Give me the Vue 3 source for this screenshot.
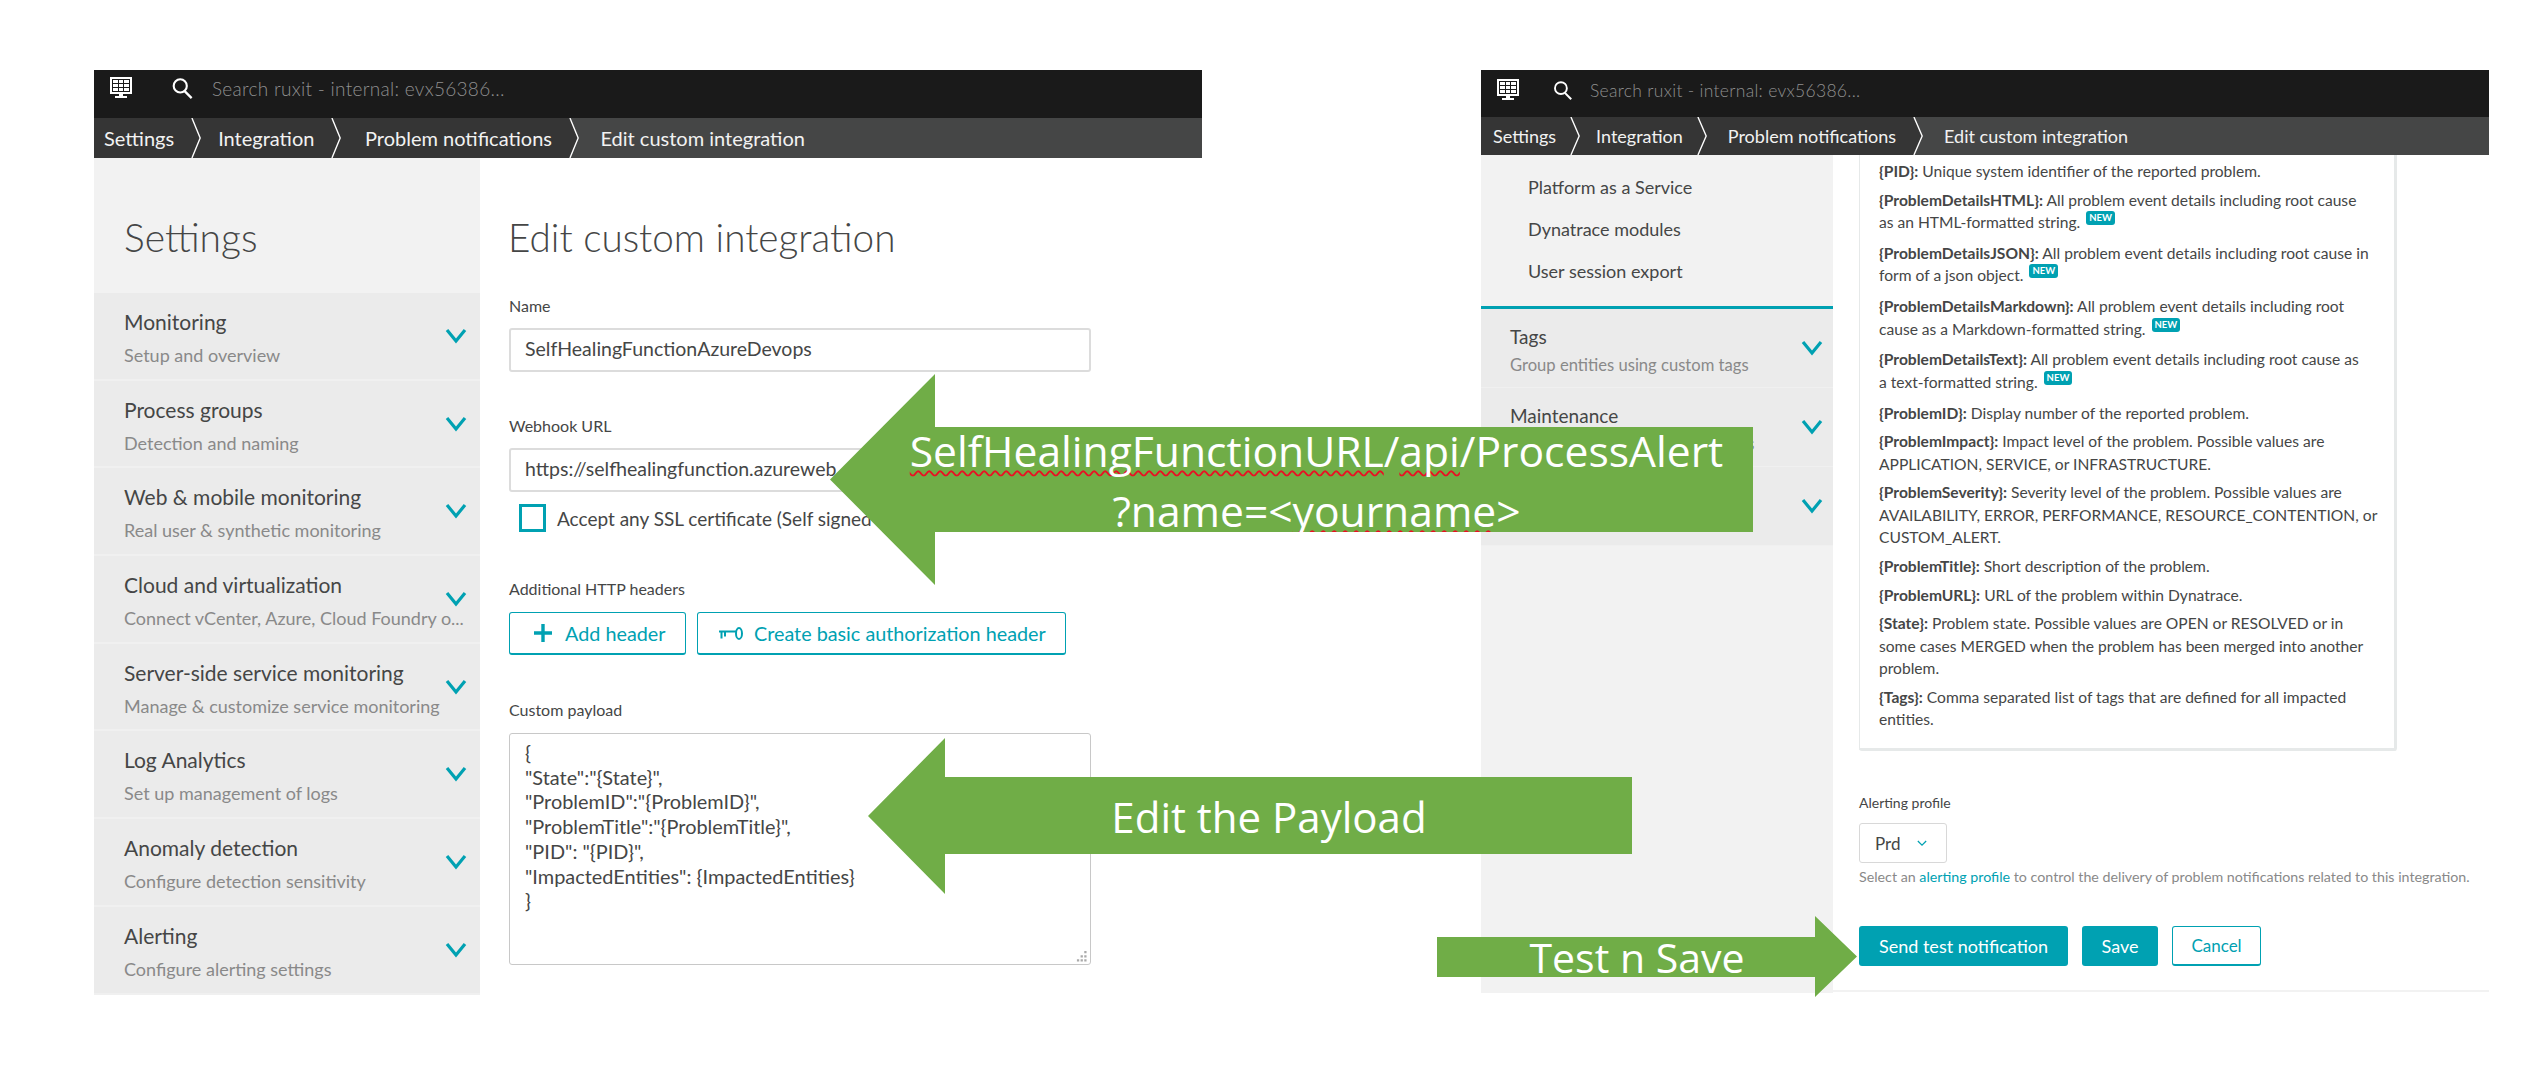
<script setup>
const crumbs = ['Settings', 'Integration', 'Problem notifications']

const leftMenu = [
  { title: 'Monitoring', sub: 'Setup and overview' },
  { title: 'Process groups', sub: 'Detection and naming' },
  { title: 'Web & mobile monitoring', sub: 'Real user & synthetic monitoring' },
  { title: 'Cloud and virtualization', sub: 'Connect vCenter, Azure, Cloud Foundry o...' },
  { title: 'Server-side service monitoring', sub: 'Manage & customize service monitoring' },
  { title: 'Log Analytics', sub: 'Set up management of logs' },
  { title: 'Anomaly detection', sub: 'Configure detection sensitivity' },
  { title: 'Alerting', sub: 'Configure alerting settings' }
]

const rightMenu = [
  { title: 'Tags', sub: 'Group entities using custom tags' },
  { title: 'Maintenance', sub: 'Configure maintenance schedules' },
  { title: '', sub: '' }
]

const subLinks = ['Platform as a Service', 'Dynatrace modules', 'User session export']

const payload = ['{', '"State":"{State}",', '"ProblemID":"{ProblemID}",', '"ProblemTitle":"{ProblemTitle}",', '"PID": "{PID}",', '"ImpactedEntities": {ImpactedEntities}', '}']

// line breaks follow the reference, the fallback font has other widths
const placeholders = [
  { key: '{PID}:', text: 'Unique system identifier of the reported problem.' },
  { key: '{ProblemDetailsHTML}:', text: 'All problem event details including root cause\nas an HTML-formatted string.', isNew: true },
  { key: '{ProblemDetailsJSON}:', text: 'All problem event details including root cause in\nform of a json object.', isNew: true },
  { key: '{ProblemDetailsMarkdown}:', text: 'All problem event details including root\ncause as a Markdown-formatted string.', isNew: true },
  { key: '{ProblemDetailsText}:', text: 'All problem event details including root cause as\na text-formatted string.', isNew: true },
  { key: '{ProblemID}:', text: 'Display number of the reported problem.' },
  { key: '{ProblemImpact}:', text: 'Impact level of the problem. Possible values are\nAPPLICATION, SERVICE, or INFRASTRUCTURE.' },
  { key: '{ProblemSeverity}:', text: 'Severity level of the problem. Possible values are\nAVAILABILITY, ERROR, PERFORMANCE, RESOURCE_CONTENTION, or\nCUSTOM_ALERT.' },
  { key: '{ProblemTitle}:', text: 'Short description of the problem.' },
  { key: '{ProblemURL}:', text: 'URL of the problem within Dynatrace.' },
  { key: '{State}:', text: 'Problem state. Possible values are OPEN or RESOLVED or in\nsome cases MERGED when the problem has been merged into another\nproblem.' },
  { key: '{Tags}:', text: 'Comma separated list of tags that are defined for all impacted\nentities.' }
]
</script>

<template>
  <div class="page">
    <!-- left screenshot -->
    <section class="shot shot-left">
      <header class="topbar">
        <svg class="monitor" viewBox="0 0 24 24"><path fill="#fff" d="M1 1h22v17H14v2h4v2H6v-2h4v-2H1z"/><path fill="#1a1a1a" d="M3 3h18v13H3z"/><path fill="#fff" d="M4 4h5v3H4zM10 4h4v3h-4zM15 4h5v3h-5zM4 8h5v3H4zM10 8h4v3h-4zM15 8h5v3h-5zM4 12h5v3H4zM10 12h4v3h-4zM15 12h5v3h-5z"/></svg>
        <svg class="search" viewBox="0 0 24 24"><circle cx="10" cy="9" r="7.500" fill="none" stroke="#fff" stroke-width="2.400"/><path d="M15 15L23 23" stroke="#fff" stroke-width="2.600"/></svg>
        <span class="search-text">Search ruxit - internal: evx56386...</span>
      </header>
      <nav class="crumbs">
        <template v-for="(c, i) in crumbs" :key="c">
          <span class="crumb">{{ c }}</span>
          <svg class="crumb-sep" viewBox="0 0 12 40" preserveAspectRatio="none"><path v-if="i === crumbs.length - 1" d="M1 0L10 20L1 40H12V0z" fill="#454646"/><path d="M1 0L10 20L1 40" fill="none" stroke="#fff" stroke-width="1.500"/></svg>
        </template>
        <span class="crumb crumb-last">Edit custom integration</span>
      </nav>
      <div class="body">
        <aside class="side">
          <h2 class="side-title">Settings</h2>
          <div v-for="m in leftMenu" :key="m.title" class="menu-item">
            <div class="menu-text">
              <div class="menu-title">{{ m.title }}</div>
              <div class="menu-sub">{{ m.sub }}</div>
            </div>
            <svg class="chev" viewBox="0 0 22 16"><path d="M2 2l9 11l9-11" fill="none" stroke="#00a1b2" stroke-width="3.200"/></svg>
          </div>
        </aside>
        <main class="form">
          <h1 class="form-title">Edit custom integration</h1>
          <label class="lbl lbl-name">Name</label>
          <div class="input">SelfHealingFunctionAzureDevops</div>
          <label class="lbl lbl-hook">Webhook URL</label>
          <div class="input">https://selfhealingfunction.azureweb</div>
          <div class="check-row">
            <span class="check"></span>
            <span>Accept any SSL certificate (Self signed c</span>
          </div>
          <label class="lbl lbl-headers">Additional HTTP headers</label>
          <div class="btn-row">
            <button class="btn btn-add">
              <svg class="plus" viewBox="0 0 20 20"><path d="M10 1v18M1 10h18" stroke="#00a1b2" stroke-width="3.400"/></svg>
              Add header
            </button>
            <button class="btn btn-auth">
              <svg class="key" viewBox="0 0 24 13"><path d="M0 4.500h17M2.500 4.500v7M6 4.500v5" fill="none" stroke="#00a1b2" stroke-width="2"/><ellipse cx="20" cy="6.500" rx="3" ry="5.500" fill="none" stroke="#00a1b2" stroke-width="2"/></svg>
              Create basic authorization header
            </button>
          </div>
          <label class="lbl lbl-payload">Custom payload</label>
          <div class="textarea">
            <div v-for="line in payload" :key="line">{{ line }}</div>
            <svg class="resize" viewBox="0 0 12 12"><path fill="#aaa" d="M9 0h2.500v2.500H9zM5 4.500h2.500V7H5zM9 4.500h2.500V7H9zM1 9h2.500v2.500H1zM5 9h2.500v2.500H5zM9 9h2.500v2.500H9z"/></svg>
          </div>
        </main>
      </div>
    </section>

    <!-- right screenshot -->
    <section class="shot shot-right">
      <header class="topbar">
        <svg class="monitor" viewBox="0 0 24 24"><path fill="#fff" d="M1 1h22v17H14v2h4v2H6v-2h4v-2H1z"/><path fill="#1a1a1a" d="M3 3h18v13H3z"/><path fill="#fff" d="M4 4h5v3H4zM10 4h4v3h-4zM15 4h5v3h-5zM4 8h5v3H4zM10 8h4v3h-4zM15 8h5v3h-5zM4 12h5v3H4zM10 12h4v3h-4zM15 12h5v3h-5z"/></svg>
        <svg class="search" viewBox="0 0 24 24"><circle cx="10" cy="9" r="7.500" fill="none" stroke="#fff" stroke-width="2.400"/><path d="M15 15L23 23" stroke="#fff" stroke-width="2.600"/></svg>
        <span class="search-text">Search ruxit - internal: evx56386...</span>
      </header>
      <nav class="crumbs">
        <template v-for="(c, i) in crumbs" :key="c">
          <span class="crumb">{{ c }}</span>
          <svg class="crumb-sep" viewBox="0 0 12 40" preserveAspectRatio="none"><path v-if="i === crumbs.length - 1" d="M1 0L10 20L1 40H12V0z" fill="#454646"/><path d="M1 0L10 20L1 40" fill="none" stroke="#fff" stroke-width="1.500"/></svg>
        </template>
        <span class="crumb crumb-last">Edit custom integration</span>
      </nav>
      <div class="body">
        <aside class="side side-r">
          <div class="sub-links">
            <div v-for="l in subLinks" :key="l" class="sub-link">{{ l }}</div>
          </div>
          <div v-for="m in rightMenu" :key="m.title" class="menu-item menu-item-r">
            <div class="menu-text">
              <div class="menu-title">{{ m.title }}</div>
              <div class="menu-sub">{{ m.sub }}</div>
            </div>
            <svg class="chev" viewBox="0 0 22 16"><path d="M2 2l9 11l9-11" fill="none" stroke="#00a1b2" stroke-width="3.200"/></svg>
          </div>
        </aside>
        <main class="detail">
          <div class="card">
            <p v-for="p in placeholders" :key="p.key" class="ph" :class="{ 'has-new': p.isNew }">
              <b>{{ p.key }}</b> {{ p.text }}<span v-if="p.isNew" class="new">NEW</span>
            </p>
          </div>
          <label class="lbl lbl-profile">Alerting profile</label>
          <div class="select">Prd<svg class="mini-chev" viewBox="0 0 12 8"><path d="M1 1l5 5l5-5" fill="none" stroke="#00a1b2" stroke-width="1.500"/></svg></div>
          <p class="hint">Select an <span class="link">alerting profile</span> to control the delivery of problem notifications related to this integration.</p>
          <div class="actions">
            <button class="btn-solid btn-send">Send test notification</button>
            <button class="btn-solid btn-save">Save</button>
            <button class="btn btn-cancel">Cancel</button>
          </div>
        </main>
      </div>
    </section>

    <!-- annotation arrows lie on top of both screenshots -->
    <div class="arrow arrow-url">
      <span>
        <i class="typo">SelfHealingFunctionURL</i>/<i class="typo">api</i>/ProcessAlert<br>?name=&lt;<i class="typo">yourname</i>&gt;
      </span>
    </div>
    <div class="arrow arrow-payload"><span>Edit the Payload</span></div>
    <div class="arrow arrow-save"><span>Test n Save</span></div>
  </div>
</template>

<style>
html, body { margin: 0; background: #fff; }
</style>

<style scoped>
.page {
  position: relative;
  width: 2521px;
  height: 1067px;
  overflow: hidden;
  background: #fff;
  font-family: Lato, "Open Sans", sans-serif;
  color: #454646;
}

.shot { position: absolute; top: 70px; height: 923px; display: flex; flex-direction: column; }
.shot-left { left: 94px; width: 1108px; }
.shot-right { left: 1481px; width: 1008px; }

.topbar {
  height: 48px;
  flex: none;
  background: #1a1a1a;
  display: flex;
  align-items: center;
  padding: 0 0 12px 15px;
  box-sizing: border-box;
}
.monitor { width: 24px; height: 24px; }
.search { width: 22px; height: 21px; margin-left: 38px; }
.search-text { margin-left: 19px; color: #8f8f8f; font-size: 19px; font-weight: 300; letter-spacing: 0.3px; }
.shot-right .topbar { height: 47px; padding-bottom: 7px; }
.shot-right .search { width: 19px; margin-left: 33px; }
.shot-right .search-text { margin-left: 18px; font-size: 17.500px; }

.crumbs {
  height: 40px;
  flex: none;
  background: #353535;
  display: flex;
  align-items: center;
  color: #f2f2f2;
  font-size: 20px;
  padding-left: 10px;
  box-sizing: border-box;
}
.crumb-sep { width: 11px; height: 100%; margin: 0 19px 0 17px; flex: none; }
.crumb-sep:nth-of-type(1) { margin-right: 16px; }
.crumb-sep:nth-of-type(2) { margin-right: 22.500px; }
.crumb-sep:nth-of-type(3) { margin-right: 20.500px; }
.crumb-last { flex: 1; align-self: stretch; display: flex; align-items: center; background: #454646; margin-left: -20.500px; padding-left: 20.500px; }
.shot-right .crumbs { height: 38px; font-size: 18px; padding-left: 12px; }
.shot-right .crumb-sep { margin-left: 14px; }
.shot-right .crumb-sep:nth-of-type(1) { margin-right: 15px; }
.shot-right .crumb-sep:nth-of-type(2) { margin-right: 20px; }
.shot-right .crumb-sep:nth-of-type(3) { margin: 0 20px 0 17px; }
.shot-right .crumb-last { margin-left: -20px; padding-left: 20px; }

.body { flex: 1; display: flex; min-height: 0; }

.side { width: 386px; flex: none; background: #f2f2f2; box-sizing: border-box; }
.side-title { height: 135px; margin: 0; padding: 55px 0 0 30px; box-sizing: border-box; font-size: 39px; font-weight: 300; line-height: 48px; color: #454646; }
.menu-item {
  height: 87.700px;
  box-sizing: border-box;
  background: #ebebeb;
  border-bottom: 2px solid #f0f0f0;
  display: flex;
  align-items: center;
  justify-content: space-between;
  padding: 0 13px 0 30px;
}
.menu-text { min-width: 0; white-space: nowrap; padding-top: 4px; }
.menu-title { font-size: 21px; line-height: 26px; color: #454646; }
.menu-sub { margin-top: 8px; font-size: 18px; line-height: 24px; color: #898989; }
.chev { width: 22px; height: 16px; flex: none; }

.form { flex: 1; background: #fff; margin-top: 28px; padding-left: 29px; }
.form-title { margin: 27px 0 0 -1px; font-size: 38.700px; line-height: 48px; font-weight: 300; color: #454646; }
.lbl { display: block; font-size: 16px; line-height: 20px; color: #454646; }
.lbl-name { margin-top: 35px; }
.lbl-hook { margin-top: 44px; }
.lbl-headers { margin-top: 47px; }
.lbl-payload { margin-top: 45px; }
.input {
  width: 582px;
  height: 44px;
  margin-top: 12px;
  box-sizing: border-box;
  border: 2px solid #dcdcdc;
  border-radius: 3px;
  padding: 0 12px 0 14px;
  font-size: 19.500px;
  line-height: 38px;
  white-space: nowrap;
  overflow: hidden;
}
.check-row { display: flex; align-items: center; gap: 11px; margin: 12px 0 0 10px; font-size: 19px; white-space: nowrap; }
.check { width: 27px; height: 28px; box-sizing: border-box; border: 3px solid #00a1b2; }
.btn-row { display: flex; gap: 11px; margin-top: 13px; }
.btn {
  height: 43px;
  box-sizing: border-box;
  border: 1px solid #00a1b2;
  border-bottom-width: 2px;
  border-radius: 3px;
  background: #fff;
  color: #00a1b2;
  font: inherit;
  font-size: 19.800px;
  display: flex;
  align-items: center;
  justify-content: flex-start;
  padding: 0;
  white-space: nowrap;
}
.btn-add { width: 177px; gap: 12px; padding-left: 23px; }
.btn-auth { width: 369px; gap: 11px; padding-left: 21px; }
.plus { width: 20px; height: 20px; }
.key { width: 24px; height: 13px; }
.textarea {
  position: relative;
  width: 582px;
  height: 232px;
  margin-top: 13px;
  box-sizing: border-box;
  border: 1px solid #c8c8c8;
  border-radius: 3px;
  padding: 6px 15px;
  font-size: 19.900px;
  line-height: 24.700px;
}
.resize { position: absolute; right: 3px; bottom: 2px; width: 11px; height: 11px; }

.side-r { width: 352px; }
.sub-links { height: 154px; padding: 11px 0 0 47px; box-sizing: border-box; border-bottom: 3px solid #00a1b2; }
.sub-link { height: 42px; line-height: 42px; font-size: 18px; }
.menu-item-r { height: 79px; padding: 0 10px 0 29px; border-bottom-width: 1px; }
.menu-item-r .menu-text { padding-top: 4px; }
.menu-item-r .menu-title { font-size: 19px; line-height: 24px; }
.menu-item-r .menu-sub { margin-top: 5px; font-size: 16.600px; line-height: 22px; }

.detail { flex: 1; background: #fff; padding-left: 26px; border-bottom: 2px solid #f2f2f2; margin-bottom: 1px; }
.card {
  width: 538px;
  box-sizing: border-box;
  height: 596px;
  padding: 5px 8px 0 19px;
  border: solid #e6e9e9;
  border-width: 0 3px 3px 1px;
  border-radius: 0 0 3px 3px;
}
.ph { margin: 0 0 6.300px; font-size: 15.600px; line-height: 22.400px; white-space: pre-line; }
.ph.has-new { margin-bottom: 8.400px; }
.ph b { font-weight: 700; }
.new {
  display: inline-block;
  margin-left: 6px;
  padding: 0 3px;
  height: 14px;
  line-height: 14px;
  vertical-align: 7px;
  border-radius: 3px;
  background: #00a1b2;
  color: #fff;
  font-size: 9.500px;
  font-weight: 700;
}
.lbl-profile { margin-top: 42px; font-size: 14px; }
.select {
  width: 88px;
  height: 40px;
  margin-top: 10px;
  box-sizing: border-box;
  border: 1px solid #d8d8d8;
  border-radius: 3px;
  display: flex;
  align-items: center;
  gap: 17px;
  padding-left: 15px;
  font-size: 17px;
}
.mini-chev { width: 10px; height: 7px; }
.hint { margin: 6px 0 0; font-size: 14.250px; line-height: 16px; color: #898989; white-space: nowrap; }
.link { color: #00a1b2; }
.actions { display: flex; gap: 14px; margin-top: 41px; }
.btn-solid {
  height: 40px;
  border: none;
  border-radius: 3px;
  background: #00a1b2;
  color: #fff;
  font: inherit;
  font-size: 18px;
  padding: 0;
}
.btn-send { width: 209px; }
.btn-save { width: 76px; }
.btn-cancel { width: 89px; height: 40px; font-size: 17px; justify-content: center; }

.arrow {
  position: absolute;
  background: #70ad47;
  color: #fff;
  display: flex;
  align-items: center;
  font-family: "Open Sans", sans-serif;
  text-align: center;
}
.arrow-url {
  left: 830px;
  top: 374px;
  width: 923px;
  height: 211px;
  clip-path: polygon(0 50%, 105px 0, 105px 53px, 100% 53px, 100% 158px, 105px 158px, 105px 100%);
  font-size: 42.600px;
  line-height: 60px;
  justify-content: center;
  padding-left: 50px;
  box-sizing: border-box;
}
.typo {
  font-style: normal;
  text-decoration: underline wavy #e81123 1.500px;
  text-decoration-skip-ink: none;
  text-underline-position: from-font;
  text-underline-offset: 1px;
}
.arrow-payload {
  left: 868px;
  top: 738px;
  width: 764px;
  height: 156px;
  clip-path: polygon(0 50%, 77px 0, 77px 39px, 100% 39px, 100% 116px, 77px 116px, 77px 100%);
  font-size: 42px;
  justify-content: center;
  padding-left: 38px;
  box-sizing: border-box;
}
.arrow-save {
  left: 1437px;
  top: 916px;
  width: 420px;
  height: 81px;
  clip-path: polygon(0 21px, 378px 21px, 378px 0, 100% 50%, 378px 100%, 378px 61px, 0 61px);
  font-size: 41px;
  justify-content: center;
  padding-right: 20px;
  box-sizing: border-box;
}
</style>
